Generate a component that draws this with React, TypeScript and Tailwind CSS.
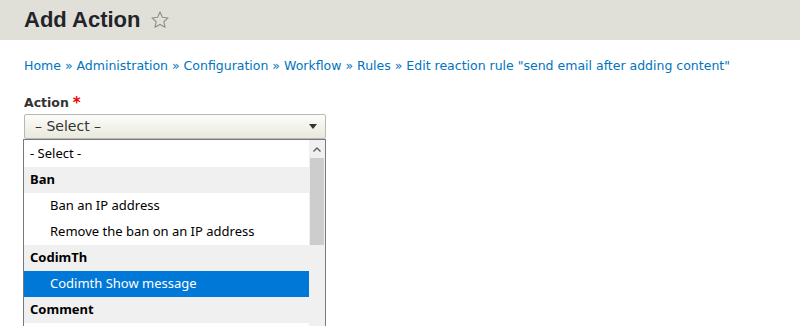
import React from 'react'

const crumbs = ['Home', 'Administration', 'Configuration', 'Workflow', 'Rules', 'Edit reaction rule "send email after adding content"']

type Opt = { label: string; kind: 'plain' | 'group' | 'item'; selected?: boolean }

const options: Opt[] = [
  { label: '- Select -', kind: 'plain' },
  { label: 'Ban', kind: 'group' },
  { label: 'Ban an IP address', kind: 'item' },
  { label: 'Remove the ban on an IP address', kind: 'item' },
  { label: 'CodimTh', kind: 'group' },
  { label: 'Codimth Show message', kind: 'item', selected: true },
  { label: 'Comment', kind: 'group' },
]

const pageFont = "font-['DejaVu_Sans',sans-serif]"
const listFont = "font-['Noto_Sans',sans-serif]"

export default function App() {
  return (
    <div className={`h-[326px] w-[800px] overflow-hidden bg-white ${pageFont}`}>
      <header className="flex h-10 items-center gap-[9px] bg-[#e0e0d8] px-6">
        <h1 className="font-['Liberation_Sans',sans-serif] text-[22px] font-bold leading-none text-[#232429]">Add Action</h1>
        <svg width="20" height="20" viewBox="0 0 24 24" className="mt-[-1px]">
          <path
            d="M12 2.5l2.9 6.3 6.8.7-5.1 4.6 1.5 6.7L12 17.4l-6.1 3.4 1.5-6.7-5.1-4.6 6.8-.7z"
            fill="none"
            stroke="#8e8e7e"
            strokeWidth="1.3"
            strokeLinejoin="round"
          />
        </svg>
      </header>

      <nav className="mt-[18px] px-6 text-[12.5px] leading-4 text-[#0074bd]">
        {crumbs.map((c, i) => (
          <span key={c}>
            {i > 0 && <span> » </span>}
            <span>{c}</span>
          </span>
        ))}
      </nav>

      <div className="mt-[21px] px-6">
        <label className="flex items-center gap-1 text-[12.5px] font-bold leading-4 text-[#333]">
          Action <span className="text-[15px] text-[#e00]">*</span>
        </label>
        <div className="relative mt-[3px] w-[302px]">
          <div className="flex h-[25px] items-center justify-between rounded-[2px] border border-[#b8b8b8] bg-gradient-to-b from-[#fcfcfa] to-[#e9e9dd] pl-[10px] pr-[8px] text-[14px] text-[#333]">
            <span>– Select –</span>
            <svg width="8" height="5" viewBox="0 0 8 5">
              <path d="M0 0h8L4 5z" fill="#333" />
            </svg>
          </div>

          <div className={`absolute left-[-1px] top-[25px] flex h-[200px] w-[303px] border border-[#7a7a7a] bg-white ${listFont}`}>
            <ul className="flex-1 pt-[1px]">
              {options.map((o) => (
                <li
                  key={o.label}
                  className={
                    o.kind === 'group'
                      ? 'flex h-[26px] items-center bg-[#f0f0f0] pl-[6px] text-[13px] font-bold text-black'
                      : o.selected
                        ? 'flex h-[26px] items-center bg-[#0078d7] pl-[26px] text-[13px] text-white'
                        : o.kind === 'item'
                          ? 'flex h-[26px] items-center pl-[26px] text-[13px] text-black'
                          : 'flex h-[26px] items-center pl-[6px] text-[13px] text-black'
                  }
                >
                  {o.label}
                </li>
              ))}
            </ul>
            <div className="flex w-[16px] flex-col bg-[#f0f0f0]">
              <div className="flex h-[18px] items-center justify-center">
                <svg width="8" height="5" viewBox="0 0 8 5">
                  <path d="M0.5 4.5L4 1l3.5 3.5" fill="none" stroke="#606060" strokeWidth="1.4" />
                </svg>
              </div>
              <div className="mx-[1px] h-[87px] bg-[#cdcdcd]" />
            </div>
          </div>
        </div>
      </div>
    </div>
  )
}
